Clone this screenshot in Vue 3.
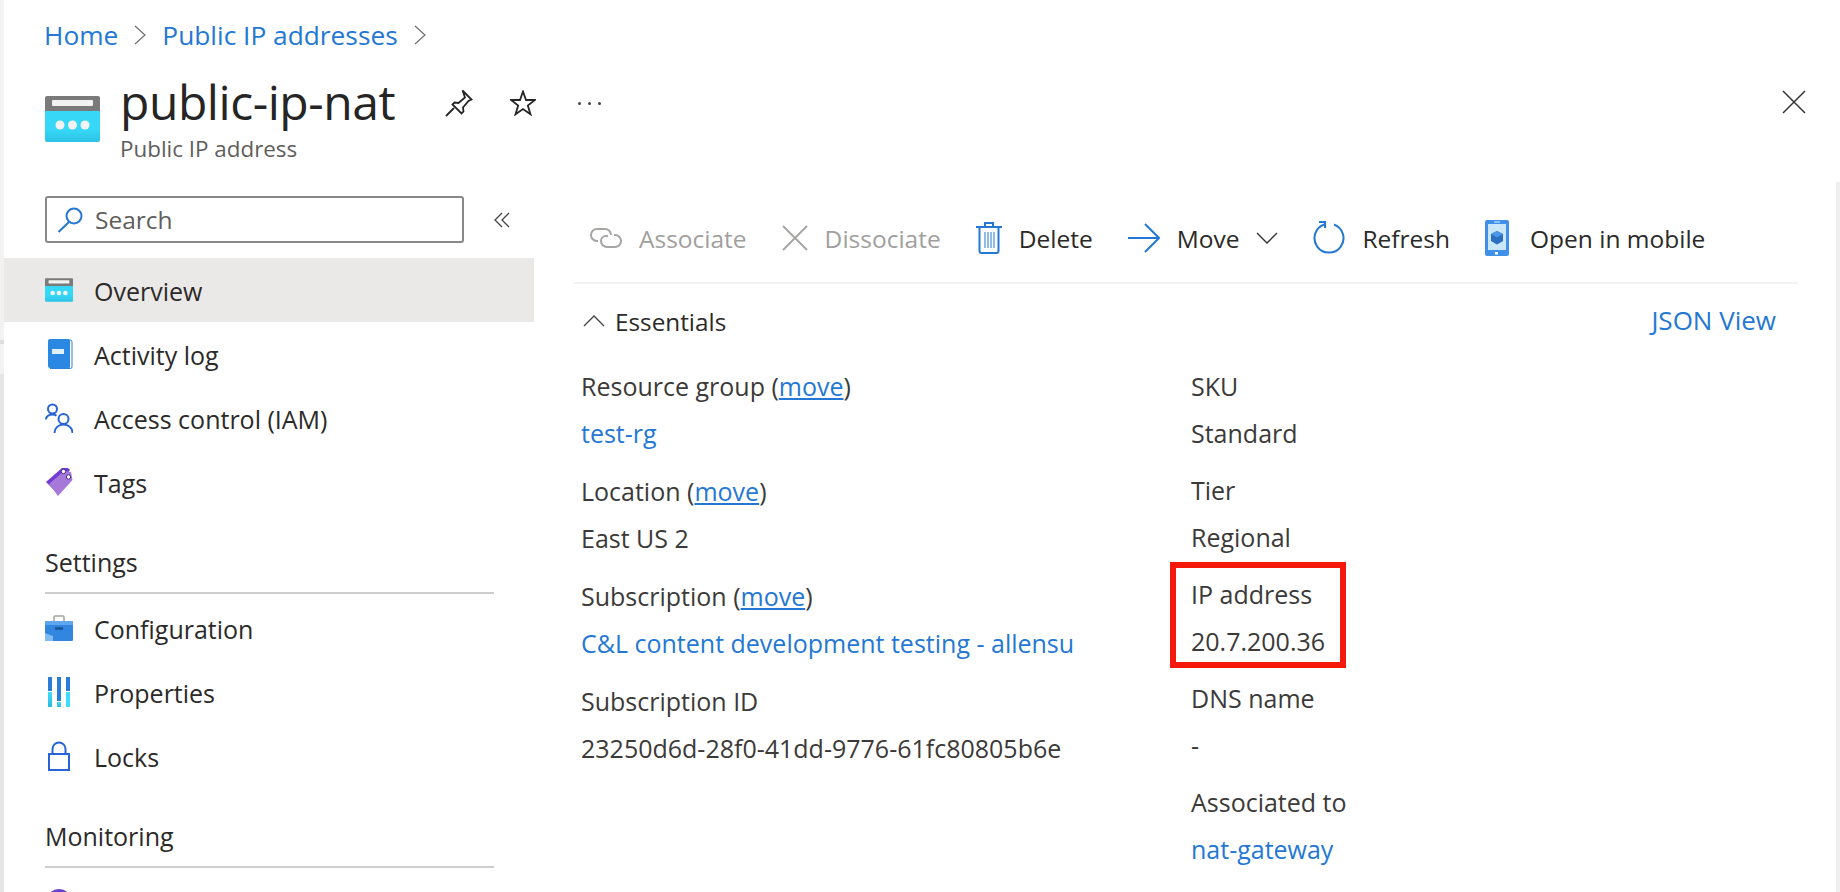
<script setup>
const leftFields = [
  { label: "Resource group", move: true, value: "test-rg", link: true },
  { label: "Location", move: true, value: "East US 2" },
  { label: "Subscription", move: true, value: "C&L content development testing - allensu", link: true },
  { label: "Subscription ID", value: "23250d6d-28f0-41dd-9776-61fc80805b6e" },
];

const rightFields = [
  { label: "SKU", value: "Standard" },
  { label: "Tier", value: "Regional" },
  { label: "IP address", value: "20.7.200.36", marked: true },
  { label: "DNS name", value: "-" },
  { label: "Associated to", value: "nat-gateway", link: true },
];
</script>

<template>
  <div class="page">
    <nav class="breadcrumb">
      <a>Home</a>
      <svg class="crumb-sep" width="12" height="20" viewBox="0 0 12 20"><path d="M1 1l10 9-10 9" /></svg>
      <a>Public IP addresses</a>
      <svg class="crumb-sep" width="12" height="20" viewBox="0 0 12 20"><path d="M1 1l10 9-10 9" /></svg>
    </nav>

    <header class="header">
      <svg class="res-icon" width="55" height="46" viewBox="0 0 55 46">
        <defs>
          <linearGradient id="cyan" x1="0" y1="0" x2="0" y2="1">
            <stop offset="0.6" stop-color="#37d7f8" />
            <stop offset="1" stop-color="#2cc3e6" />
          </linearGradient>
        </defs>
        <path d="M0 14h55v30a2 2 0 0 1-2 2H2a2 2 0 0 1-2-2z" fill="url(#cyan)" />
        <path d="M2 0h51a2 2 0 0 1 2 2v13H0V2a2 2 0 0 1 2-2z" fill="#7a7a7a" />
        <rect x="7" y="4" width="41" height="6" rx="1" fill="#f2f2f2" />
        <circle cx="15" cy="29" r="4.5" fill="#f2f2f2" />
        <circle cx="27.5" cy="29" r="4.5" fill="#f2f2f2" />
        <circle cx="40" cy="29" r="4.5" fill="#f2f2f2" />
      </svg>
      <div class="title-block">
        <h1>public-ip-nat</h1>
        <div class="subtitle">Public IP address</div>
      </div>
      <div class="title-actions">
        <svg width="28" height="28" viewBox="0 0 28 28" class="line-icon">
          <path d="M17.5 1.5l9 9-3 1.5-5.500 6.500 0.500 4-2 2-9-9 2-2 4 0.500 6.500-5.500zM1 27l8-8" />
        </svg>
        <svg width="26" height="26" viewBox="0 0 26 26" class="line-icon">
          <path d="M13 1.500l3 8.500h9l-7.200 5.500 2.700 8.800-7.500-5.300-7.500 5.300 2.700-8.800L1 10h9z" />
        </svg>
        <span class="dots"><i></i><i></i><i></i></span>
      </div>
      <svg class="close" width="24" height="24" viewBox="0 0 24 24"><path d="M1 1l22 22M23 1L1 23" /></svg>
    </header>

    <div class="body">
      <aside class="sidebar">
        <div class="search-row">
          <div class="search">
            <svg width="26" height="26" viewBox="0 0 26 26" class="blue-line">
              <circle cx="17" cy="9" r="7.500" /><path d="M12 15L1.500 25" />
            </svg>
            <span>Search</span>
          </div>
          <svg class="collapse" width="16" height="16" viewBox="0 0 16 16"><path d="M8 1L1 8l7 7M15 1L8 8l7 7" /></svg>
        </div>

        <div class="nav-item active">
          <svg width="28" height="24" viewBox="0 0 55 46">
            <path d="M0 14h55v30a2 2 0 0 1-2 2H2a2 2 0 0 1-2-2z" fill="url(#cyan)" />
            <path d="M2 0h51a2 2 0 0 1 2 2v13H0V2a2 2 0 0 1 2-2z" fill="#7a7a7a" />
            <rect x="7" y="4" width="41" height="6" rx="1" fill="#f2f2f2" />
            <circle cx="15" cy="29" r="4.500" fill="#f2f2f2" />
            <circle cx="27.500" cy="29" r="4.500" fill="#f2f2f2" />
            <circle cx="40" cy="29" r="4.500" fill="#f2f2f2" />
          </svg>
          <span>Overview</span>
        </div>
        <div class="nav-item">
          <svg width="28" height="30" viewBox="0 0 28 30">
            <path d="M5 1h20a2 2 0 0 1 2 2v25a1.500 1.500 0 0 1-1.500 1.500H5" fill="#fff" stroke="#2b83de" stroke-width="1" />
            <path d="M5 0h18a2 2 0 0 1 2 2v26a1 1 0 0 1-1 1H5a2 2 0 0 1-2-2V2a2 2 0 0 1 2-2z" fill="#2b88e2" />
            <rect x="7" y="10" width="12" height="5" fill="#dfeffc" />
          </svg>
          <span>Activity log</span>
        </div>
        <div class="nav-item">
          <svg width="28" height="30" viewBox="0 0 28 30" class="people">
            <circle cx="7.500" cy="6" r="4.500" /><path d="M0.500 16.500c1-3 3.500-5 7-5 1.500 0 3 .4 4 1.200" />
            <circle cx="18.500" cy="16" r="5" /><path d="M9.500 30c0-5 4-8.500 9-8.500s9 3.500 9 8.500" />
          </svg>
          <span>Access control (IAM)</span>
        </div>
        <div class="nav-item">
          <svg width="28" height="30" viewBox="0 0 28 30">
            <path d="M1 15L17 1h6l2 2-16 20z" fill="#7139d6" />
            <path d="M4 17L19 4l7 1 1.500 8L13 29z" fill="#a678d8" />
            <circle cx="18.500" cy="4.500" r="2.200" fill="#fff" stroke="#4a2d86" />
            <circle cx="23.500" cy="10" r="2.200" fill="#fff" stroke="#4a2d86" />
          </svg>
          <span>Tags</span>
        </div>

        <div class="nav-heading">Settings</div>
        <div class="nav-item">
          <svg width="28" height="26" viewBox="0 0 28 26">
            <path d="M9 6V2a1 1 0 0 1 1-1h8a1 1 0 0 1 1 1v4" fill="none" stroke="#a3a3a3" stroke-width="1.500" />
            <rect x="0" y="6" width="28" height="20" rx="1" fill="#3286e0" />
            <rect x="0" y="6" width="28" height="4" fill="#5ea7ee" />
            <rect x="10" y="12" width="8" height="3" fill="#1a5a9e" />
            <path d="M0 18l8 3v5H1a1 1 0 0 1-1-1z" fill="#80bbf1" />
          </svg>
          <span>Configuration</span>
        </div>
        <div class="nav-item">
          <svg width="28" height="30" viewBox="0 0 28 30">
            <defs>
              <linearGradient id="bar" x1="0" y1="0" x2="0" y2="1">
                <stop offset="0" stop-color="#41dcfb" />
                <stop offset="1" stop-color="#2bb9de" />
              </linearGradient>
            </defs>
            <rect x="3" y="0" width="4" height="14" fill="#2b7cd6" />
            <rect x="3" y="15" width="4" height="15" fill="url(#bar)" />
            <rect x="12" y="0" width="4" height="24" fill="#2b7cd6" />
            <rect x="12" y="25" width="4" height="5" fill="url(#bar)" />
            <rect x="21" y="0" width="4" height="14" fill="#2b7cd6" />
            <rect x="21" y="15" width="4" height="15" fill="#41dcfb" />
          </svg>
          <span>Properties</span>
        </div>
        <div class="nav-item">
          <svg width="28" height="30" viewBox="0 0 28 30" class="lock">
            <rect x="4" y="13" width="20" height="16" /><path d="M7.500 13V8a6.500 6.500 0 0 1 13 0v5" />
          </svg>
          <span>Locks</span>
        </div>

        <div class="nav-heading">Monitoring</div>
        <div class="nav-item">
          <svg width="28" height="28" viewBox="0 0 28 28"><circle cx="14" cy="14" r="13" fill="#6b3fc9" /></svg>
        </div>
      </aside>

      <main class="main">
        <div class="toolbar">
          <div class="tool disabled">
            <svg width="32" height="24" viewBox="0 0 32 24" class="grey-line">
              <path d="M8 15H7a6 6 0 0 1 0-12h8a6 6 0 0 1 6 6" /><path d="M24 9h1a6 6 0 0 1 0 12h-8a6 6 0 0 1-6-6 5 5 0 0 1 5-5h2" />
            </svg>
            <span>Associate</span>
          </div>
          <div class="tool disabled">
            <svg width="26" height="26" viewBox="0 0 26 26" class="grey-line"><path d="M1 1l24 24M25 1L1 25" /></svg>
            <span>Dissociate</span>
          </div>
          <div class="tool">
            <svg width="26" height="32" viewBox="0 0 26 32" class="blue-line">
              <path d="M0 5h26M9 5V1h8v4M3.500 5v24a2 2 0 0 0 2 2h15a2 2 0 0 0 2-2V5" />
              <path d="M9 10v16M12 10v16M15 10v16M18 10v16" stroke-width="1" />
            </svg>
            <span>Delete</span>
          </div>
          <div class="tool">
            <svg width="32" height="32" viewBox="0 0 32 32" class="blue-line"><path d="M0 16h31M17 2l14 14-14 14" /></svg>
            <span>Move</span>
            <svg class="move-chevron" width="22" height="12" viewBox="0 0 22 12"><path d="M1 1l10 10L21 1" /></svg>
          </div>
          <div class="tool">
            <svg width="32" height="34" viewBox="0 0 32 34" class="blue-line">
              <path d="M11 3.500A14.500 14.500 0 1 0 21 3.500M6 1h6v6" />
            </svg>
            <span>Refresh</span>
          </div>
          <div class="tool phone">
            <svg width="24" height="36" viewBox="0 0 24 36">
              <rect width="24" height="36" rx="2" fill="#3e90e8" />
              <rect x="3" y="4" width="18" height="26" fill="#c9e6fb" />
              <rect x="9" y="1.500" width="6" height="1" fill="#dff0fd" />
              <rect x="10" y="32" width="3" height="2.500" fill="#fff" />
              <path d="M12 11l6 3v7l-6 3.500-6-3.500v-7z" fill="#2b6fc0" />
              <path d="M12 11l6 3-6 3.500L6 14z" fill="#4b96e6" />
            </svg>
            <span>Open in mobile</span>
          </div>
        </div>

        <div class="essentials-bar">
          <svg width="22" height="12" viewBox="0 0 22 12" class="dark-line"><path d="M1 11L11 1l10 10" /></svg>
          <span class="essentials">Essentials</span>
          <a class="json-view">JSON View</a>
        </div>

        <div class="fields">
          <div class="col left">
            <div v-for="f in leftFields" :key="f.label" class="field">
              <div class="label">{{ f.label }}<template v-if="f.move"> (<a class="underline">move</a>)</template></div>
              <a v-if="f.link">{{ f.value }}</a>
              <div v-else class="value">{{ f.value }}</div>
            </div>
          </div>
          <div class="col right">
            <div v-for="f in rightFields" :key="f.label" class="field" :class="{ marked: f.marked }">
              <div class="label">{{ f.label }}</div>
              <a v-if="f.link">{{ f.value }}</a>
              <div v-else class="value">{{ f.value }}</div>
            </div>
          </div>
        </div>
      </main>
    </div>
  </div>
</template>

<style>
html,
body {
  margin: 0;
  background: #fff;
}
</style>

<style scoped>
.page {
  width: 1840px;
  height: 892px;
  overflow: hidden;
  box-sizing: border-box;
  padding-left: 4px;
  font-family: "Open Sans", "Noto Sans", sans-serif;
  font-size: 25px;
  color: #2b2a29;
  background:
    linear-gradient(#f2f2f2 0 340px, #dedede 340px 344px, #f2f2f2 344px 374px, #e6e6e6 374px) left / 4px 100% no-repeat,
    linear-gradient(transparent 182px, #eeeeee 182px) right / 4px 100% no-repeat,
    #fff;
}

a {
  color: #2478d4;
}

.underline {
  text-decoration: underline;
}

svg {
  flex: none;
  display: block;
}

.breadcrumb {
  display: flex;
  align-items: center;
  height: 69px;
  padding-left: 40px;
  font-size: 26.300px;
}

.crumb-sep {
  margin: 0 16px;
  fill: none;
  stroke: #6d6d6d;
  stroke-width: 1.200;
}

.header {
  display: flex;
  align-items: flex-start;
  height: 111px;
  padding-left: 41px;
}

.res-icon {
  margin-top: 27px;
}

.title-block {
  margin-left: 20px;
}

h1 {
  margin: 0;
  font-size: 48px;
  font-weight: 400;
  line-height: 66px;
  letter-spacing: -0.450px;
  color: #252525;
}

.subtitle {
  font-size: 22.400px;
  line-height: 30px;
  color: #605e5c;
  margin-top: -1px;
}

.title-actions {
  display: flex;
  align-items: center;
  gap: 37px;
  margin: 20px 0 0 50px;
}

.line-icon {
  fill: none;
  stroke: #252525;
  stroke-width: 1.800;
}

.dots {
  display: flex;
  gap: 7px;
  margin-left: 5px;
}

.dots i {
  width: 3px;
  height: 3px;
  border-radius: 50%;
  background: #444;
}

.close {
  margin: 21px 34px 0 auto;
  fill: none;
  stroke: #333;
  stroke-width: 1.500;
}

.body {
  display: flex;
}

.sidebar {
  width: 530px;
  flex: none;
}

.search-row {
  display: flex;
  align-items: center;
  height: 47px;
  padding: 16px 0 0 41px;
  margin-bottom: 15px;
}

.search {
  display: flex;
  align-items: center;
  gap: 12px;
  box-sizing: border-box;
  width: 419px;
  height: 47px;
  padding-left: 10px;
  border: 2px solid #8a8886;
  border-radius: 3px;
  font-size: 24.500px;
  color: #605e5c;
}

.blue-line {
  fill: none;
  stroke: #2478d4;
  stroke-width: 2;
}

.collapse {
  margin-left: 30px;
  fill: none;
  stroke: #444;
  stroke-width: 1.300;
}

.nav-item {
  display: flex;
  align-items: center;
  height: 64px;
  padding-left: 41px;
}

.nav-item svg {
  width: 28px;
}

.nav-item span {
  margin-left: 21px;
  margin-top: 2px;
}

.nav-item.active {
  background: #ebe9e7;
}

.people {
  fill: none;
  stroke: #2864d8;
  stroke-width: 2;
}

.lock {
  fill: none;
  stroke: #2864d8;
  stroke-width: 2;
}

.nav-heading {
  display: flex;
  align-items: flex-end;
  box-sizing: border-box;
  height: 80px;
  line-height: 34px;
  padding-bottom: 13px;
  margin: 0 40px 2px 41px;
  border-bottom: 2px solid #cfcdcc;
}

.main {
  flex: 1;
  min-width: 0;
  padding: 0 42px 0 40px;
}

.toolbar {
  display: flex;
  align-items: center;
  box-sizing: border-box;
  height: 104px;
  padding: 14px 0 0 16px;
  gap: 35px;
  font-size: 24.500px;
  border-bottom: 2px solid #f3f2f1;
}

.tool {
  display: flex;
  align-items: center;
  gap: 17px;
}

.tool.phone {
  gap: 21px;
}

.tool.disabled {
  color: #a19f9d;
}

.grey-line {
  fill: none;
  stroke: #a8a6a4;
  stroke-width: 2;
}

.move-chevron {
  fill: none;
  stroke: #333;
  stroke-width: 1.400;
}

.essentials-bar {
  display: flex;
  align-items: center;
  height: 74px;
  padding-left: 9px;
  padding-right: 22px;
}

.dark-line {
  fill: none;
  stroke: #444;
  stroke-width: 1.400;
}

.essentials {
  margin-left: 10px;
  font-size: 24.300px;
}

.json-view {
  margin-left: auto;
  font-size: 26px;
  margin-top: -2px;
}

.fields {
  display: flex;
  padding: 5px 0 0 7px;
}

.col {
  flex: none;
  width: 610px;
}

.field {
  position: relative;
  display: flex;
  flex-direction: column;
  line-height: 47px;
}

.left .field {
  height: 105px;
}

.right .field {
  height: 104px;
}

.field.marked::after {
  content: "";
  position: absolute;
  left: -21px;
  top: -9px;
  box-sizing: border-box;
  width: 176px;
  height: 106px;
  border: 6px solid #f5190b;
}

.label,
.value {
  color: #3b3a39;
}
</style>
